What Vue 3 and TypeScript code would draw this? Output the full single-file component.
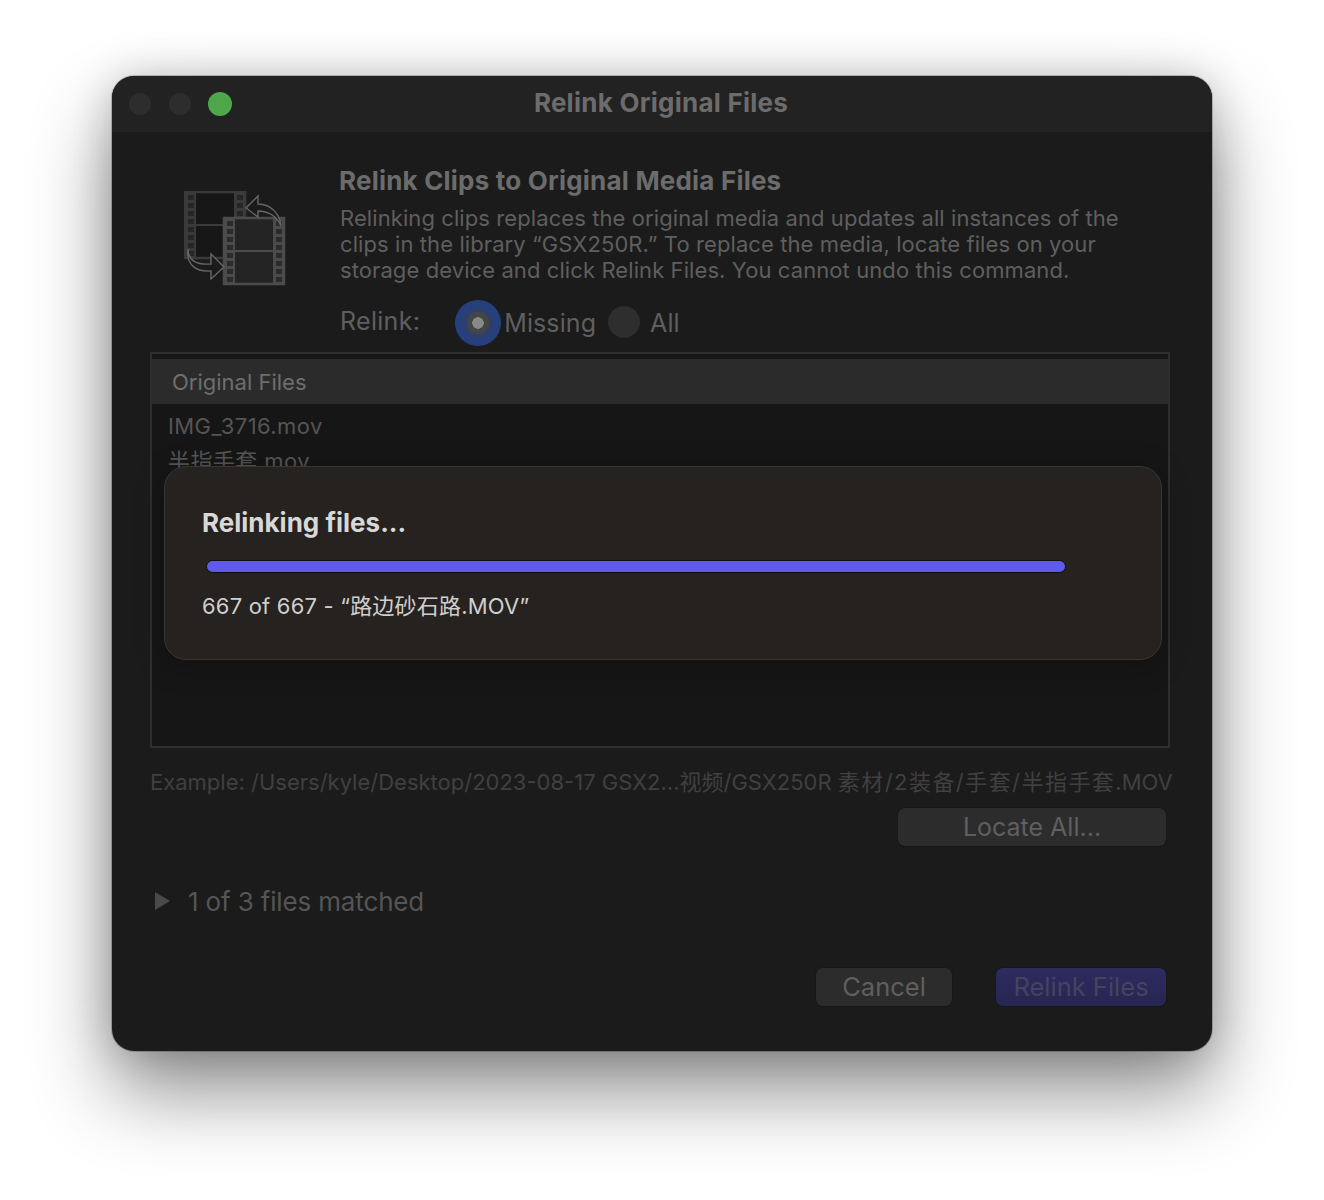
<script setup lang="ts">
const sprocketY = [0, 1, 2, 3, 4, 5, 6, 7]
const files = ['IMG_3716.mov', '半指手套.mov']
</script>

<template>
<main class="page">
	<div class="window">
		<header class="titlebar">
			<div class="lights">
				<span class="light"></span>
				<span class="light"></span>
				<span class="light green"></span>
			</div>
			<h1>Relink Original Files</h1>
		</header>

		<section class="content">
			<div class="intro">
				<svg class="film-icon" width="104" height="96" viewBox="0 0 104 96" fill="none">
					<rect x="1" y="1" width="60" height="66" fill="#171717" stroke="#3a3a3a" stroke-width="2.5" />
					<path d="M1 1H12V67H1ZM50 1H61V67H50Z" fill="#3a3a3a" />
					<path d="M12 34H50" stroke="#3a3a3a" stroke-width="2" />
					<g v-for="i in sprocketY" :key="i" fill="#262626">
						<rect x="4" :y="4 + i * 8" width="6" height="5" />
						<rect x="53" :y="4 + i * 8" width="6" height="5" />
					</g>
					<rect x="40" y="27" width="60" height="66" fill="#242424" stroke="#4b4b4b" stroke-width="2.5" />
					<path d="M40 27H51V93H40ZM89 27H100V93H89Z" fill="#4b4b4b" />
					<path d="M51 60H89" stroke="#4b4b4b" stroke-width="2" />
					<g v-for="i in sprocketY" :key="i" fill="#2b2b2b">
						<rect x="43" :y="30 + i * 8" width="6" height="5" />
						<rect x="92" :y="30 + i * 8" width="6" height="5" />
					</g>
					<g stroke="#666" stroke-width="1.4" fill="#1b1b1b" stroke-linejoin="miter">
						<path d="M97 35C96 24 88 13 74 13V5L62 17L74 26V20C84 20 93 25 97 35Z" />
						<path d="M4 58C4 70 13 74 27 73V63L40 76L27 88V80C12 81 2 74 4 58Z" />
					</g>
				</svg>
				<div class="intro-text">
					<h2>Relink Clips to Original Media Files</h2>
					<p>Relinking clips replaces the original media and updates all instances of the<br />clips in the library “GSX250R.” To replace the media, locate files on your<br />storage device and click Relink Files. You cannot undo this command.</p>
					<div class="relink-row">
						<span class="relink-label">Relink:</span>
						<span class="radio selected"></span>
						<span class="radio-label missing">Missing</span>
						<span class="radio"></span>
						<span class="radio-label">All</span>
					</div>
				</div>
			</div>

			<div class="table">
				<div class="table-head">Original Files</div>
				<ul class="rows">
					<li v-for="f in files" :key="f">{{ f }}</li>
				</ul>
				<div class="sheet">
					<h3>Relinking files...</h3>
					<div class="progress"></div>
					<p>667 of 667 - “路边砂石路.MOV”</p>
				</div>
			</div>

			<p class="example">Example: /Users/kyle/Desktop/2023-08-17 GSX2...视频/GSX250R <span class="wide">素材/2装备/手套/半指手套</span>.MOV</p>

			<div class="locate-row">
				<button class="btn locate">Locate All...</button>
			</div>

			<div class="disclosure">
				<svg width="15" height="18" viewBox="0 0 15 18"><path d="M0 0L15 9L0 18Z" fill="#4a4a4a" /></svg>
				<span>1 of 3 files matched</span>
			</div>

			<div class="footer">
				<button class="btn cancel">Cancel</button>
				<button class="btn primary">Relink Files</button>
			</div>
		</section>
	</div>
</main>
</template>

<style>
html, body {
	background: #fff;
	margin: 0;
}
</style>

<style scoped>
* {
	box-sizing: border-box;
	margin: 0;
}

.page {
	font-family: Inter, "Noto Sans CJK SC", sans-serif;
	height: 1200px;
	overflow: hidden;
	padding: 76px 112px 0;
}

.window {
	background: #1b1b1b;
	border-radius: 22px;
	box-shadow: 0 0 0 1px rgba(0, 0, 0, 0.2), 0 40px 80px rgba(0, 0, 0, 0.45), 0 0 40px rgba(0, 0, 0, 0.18);
	height: 975px;
	overflow: hidden;
	width: 1100px;
}

.titlebar {
	align-items: center;
	background: #222;
	display: flex;
	height: 56px;
	justify-content: center;
	position: relative;
}

.titlebar h1 {
	color: #6c6c6c;
	font-size: 26px;
	font-weight: 700;
	letter-spacing: 0.25px;
	margin: -4px 0 0 -2px;
}

.lights {
	display: flex;
	gap: 18px;
	left: 17px;
	position: absolute;
	top: 17px;
}

.light {
	background: #2d2d2d;
	border-radius: 50%;
	height: 22px;
	width: 22px;
}

.light.green {
	background: #4ea849;
	height: 24px;
	margin: -1px 0 0 -1px;
	width: 24px;
}

.content {
	padding: 34px 42px 0 38px;
}

.intro {
	display: flex;
	padding-left: 34px;
}

.film-icon {
	flex: none;
	margin-top: 25px;
}

.intro-text {
	margin-left: 51px;
}

.intro-text h2 {
	color: #6c6c6c;
	font-size: 26px;
	font-weight: 700;
	letter-spacing: 0.2px;
	line-height: 30px;
}

.intro-text p {
	color: #5f5f5f;
	font-size: 22px;
	letter-spacing: 0.09px;
	line-height: 26px;
	margin-top: 9px;
	padding-left: 1px;
}

.relink-row {
	align-items: center;
	display: flex;
	height: 46px;
	margin-top: 17px;
	padding-left: 1px;
}

.relink-label {
	color: #5f5f5f;
	font-size: 25px;
	letter-spacing: 0.3px;
	margin-right: 35px;
	margin-top: -4px;
}

.radio {
	background: #2e2e2e;
	border-radius: 50%;
	flex: none;
	height: 32px;
	margin-top: -3px;
	width: 32px;
}

.radio.selected {
	background: radial-gradient(circle, #888 0 5.5px, #454545 6px 11px, #2d3f6e 11.5px 16px, #25407c 16.5px);
	height: 46px;
	margin-top: 0;
	width: 46px;
}

.radio-label {
	color: #5f5f5f;
	font-size: 25px;
	letter-spacing: 0.1px;
	margin-left: 10px;
}

.radio-label.missing {
	margin-left: 3px;
	margin-right: 12px;
}

.table {
	background: #161616;
	border: 2px solid #2f2f2f;
	height: 396px;
	margin-top: 6px;
	padding-top: 5px;
	position: relative;
	width: 1020px;
}

.table-head {
	background: #2b2b2b;
	color: #6e6e6e;
	font-size: 22px;
	height: 45px;
	line-height: 47px;
	padding-left: 20px;
}

.rows {
	list-style: none;
	padding: 5px 0 0 16px;
}

.rows li {
	color: #555;
	font-size: 22px;
	letter-spacing: 0.4px;
	line-height: 35px;
}

.sheet {
	background: #25221f;
	border: 1px solid #3a3733;
	border-radius: 22px;
	box-shadow: 0 6px 30px rgba(0, 0, 0, 0.25);
	height: 194px;
	left: 12px;
	padding: 40px 37px 0;
	position: absolute;
	top: 112px;
	width: 998px;
}

.sheet h3 {
	color: #d8d8d8;
	font-size: 26px;
	font-weight: 700;
	line-height: 32px;
}

.progress {
	background: #5f5ae8;
	border: 1px solid #0d0d12;
	border-radius: 7px;
	height: 13px;
	margin: 21px 0 0 4px;
	width: 860px;
}

.sheet p {
	color: #cfcfcf;
	font-size: 22px;
	letter-spacing: 0.2px;
	line-height: 28px;
	margin-top: 19px;
}

.example {
	color: #404040;
	font-size: 22px;
	line-height: 26px;
	margin-top: 21px;
	white-space: nowrap;
}

.wide {
	letter-spacing: 1.45px;
}

.locate-row {
	display: flex;
	justify-content: flex-end;
	margin-top: 12px;
	padding-right: 3px;
}

.btn {
	background: #2c2c2c;
	border: 1px solid #171717;
	border-radius: 8px;
	color: #5f5f5f;
	font-family: inherit;
	font-size: 25.5px;
	height: 40px;
	line-height: 1;
	padding: 0;
}

.locate {
	font-size: 25px;
	width: 270px;
}

.disclosure {
	align-items: center;
	color: #555;
	display: flex;
	font-size: 26px;
	gap: 18px;
	height: 30px;
	letter-spacing: -0.15px;
	margin-top: 39px;
	padding-left: 5px;
}

.footer {
	display: flex;
	gap: 42px;
	justify-content: flex-end;
	margin-top: 51px;
	padding-right: 3px;
}

.cancel {
	width: 138px;
}

.primary {
	background: linear-gradient(#2d2b60, #272651);
	color: #45445f;
	width: 172px;
}
</style>
